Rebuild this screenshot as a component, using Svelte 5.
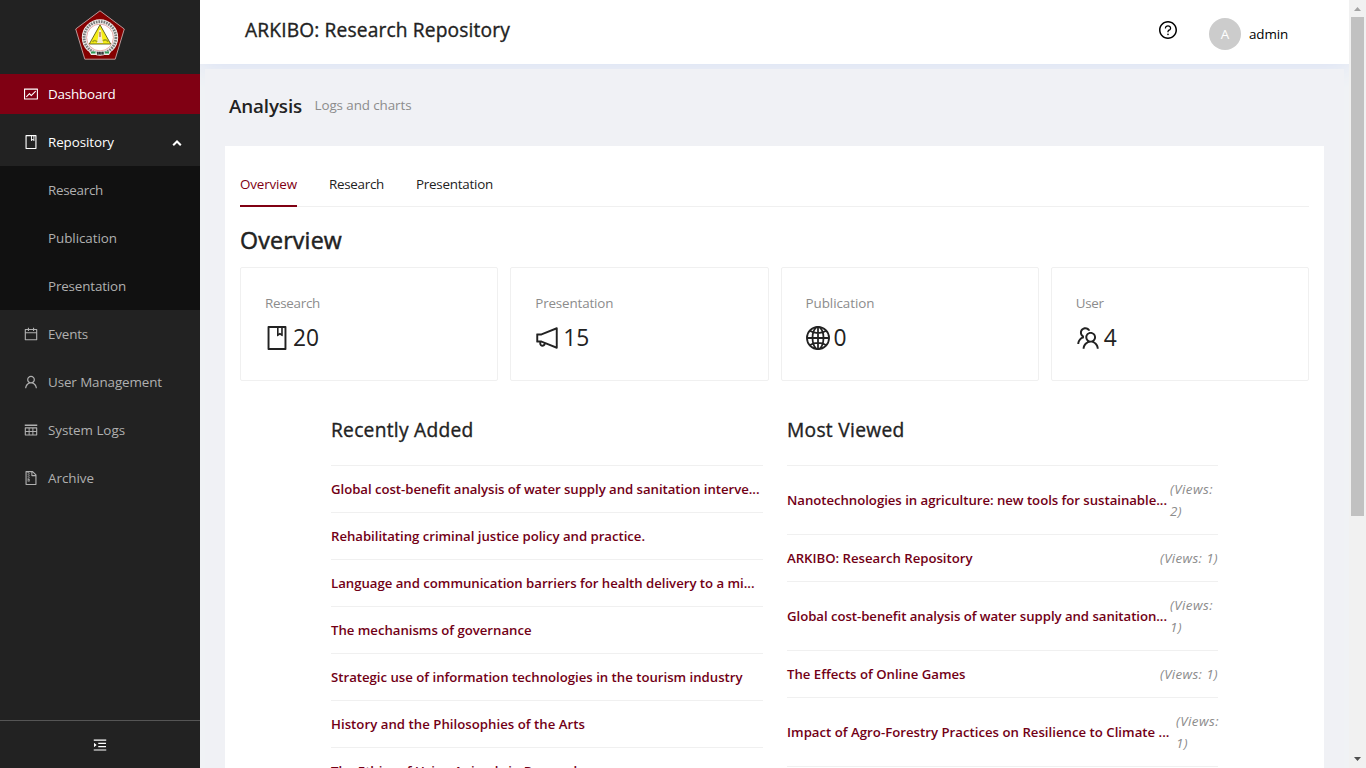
<script>
  const icons = {
    fund: 'M926 164H94c-17.7 0-32 14.3-32 32v640c0 17.7 14.3 32 32 32h832c17.7 0 32-14.3 32-32V196c0-17.7-14.3-32-32-32zm-40 632H134V236h752v560zm-658.9-82.3c3.1 3.1 8.2 3.1 11.3 0l172.5-172.5 114.4 114.5c3.1 3.1 8.2 3.1 11.3 0l297-297.2c3.1-3.1 3.1-8.2 0-11.3l-36.8-36.8a8.03 8.03 0 00-11.3 0L531 565 416.6 450.5a8.03 8.03 0 00-11.3 0l-214.9 215a8.03 8.03 0 000 11.3l36.7 36.9z',
    book: 'M832 64H192c-17.7 0-32 14.3-32 32v832c0 17.7 14.3 32 32 32h640c17.7 0 32-14.3 32-32V96c0-17.7-14.3-32-32-32zm-260 72h96v209.9L621.5 312 572 347.4V136zm220 752H232V136h280v296.9c0 3.3 1 6.6 3 9.3a15.9 15.9 0 0022.3 3.7l83.8-59.9 81.4 59.4c2.7 2 6 3.1 9.4 3.1 8.8 0 16-7.2 16-16V136h64v752z',
    calendar: 'M880 184H712v-64c0-4.4-3.6-8-8-8h-56c-4.4 0-8 3.6-8 8v64H384v-64c0-4.4-3.6-8-8-8h-56c-4.4 0-8 3.6-8 8v64H144c-17.7 0-32 14.3-32 32v664c0 17.7 14.3 32 32 32h736c17.7 0 32-14.3 32-32V216c0-17.7-14.3-32-32-32zm-40 656H184V460h656v380zM184 392V256h128v48c0 4.4 3.6 8 8 8h56c4.4 0 8-3.6 8-8v-48h256v48c0 4.4 3.6 8 8 8h56c4.4 0 8-3.6 8-8v-48h128v136H184z',
    user: 'M858.5 763.6a374 374 0 00-80.6-119.5 375.63 375.63 0 00-119.5-80.6c-.4-.2-.8-.3-1.2-.5C719.5 518 760 444.7 760 362c0-137-111-248-248-248S264 225 264 362c0 82.7 40.5 156 102.8 201.1-.4.2-.8.3-1.2.5-44.8 18.9-85 46-119.5 80.6a375.63 375.63 0 00-80.6 119.5A371.7 371.7 0 00136 901.8a8 8 0 008 8.2h60c4.4 0 7.9-3.5 8-7.8 2-77.2 33-149.5 87.8-204.3 56.7-56.7 132-87.9 212.2-87.9s155.5 31.2 212.2 87.9C779 752.7 810 825 812 902.2c.1 4.4 3.6 7.8 8 7.8h60a8 8 0 008-8.2c-1-47.8-10.9-94.3-29.5-138.2zM512 534c-45.9 0-89.1-17.9-121.6-50.4S340 407.9 340 362c0-45.9 17.9-89.1 50.4-121.6S466.1 190 512 190s89.1 17.9 121.6 50.4S684 316.1 684 362c0 45.9-17.9 89.1-50.4 121.6S557.9 534 512 534z',
    rows: 'M878.7 336H145.3c-18.4 0-33.3 14.3-33.3 32v464c0 17.7 14.9 32 33.3 32h733.3c18.4 0 33.3-14.3 33.3-32V368c.1-17.7-14.8-32-33.2-32zM360 792H184V632h176v160zm0-224H184V408h176v160zm240 224H424V632h176v160zm0-224H424V408h176v160zm240 224H664V632h176v160zm0-224H664V408h176v160zm64-408H120c-4.4 0-8 3.6-8 8v80c0 4.4 3.6 8 8 8h784c4.4 0 8-3.6 8-8v-80c0-4.4-3.6-8-8-8z',
    zip: 'M296 392h64v64h-64zm0 190v160h128V582h-64v-62h-64v62zm80 48v64h-32v-64h32zm-16-302h64v64h-64zm-64-64h64v64h-64zm64 192h64v64h-64zm0-256h64v64h-64zm494.6 88.6L639.4 73.4c-6-6-14.1-9.4-22.6-9.4H192c-17.7 0-32 14.3-32 32v832c0 17.7 14.3 32 32 32h640c17.7 0 32-14.3 32-32V311.3c0-8.5-3.4-16.7-9.4-22.7zM602 137.8L790.2 326H602V137.8zM792 888H232V136h64v64h64v-64h174v216a42 42 0 0042 42h216v494z',
    question: 'M512 64C264.6 64 64 264.6 64 512s200.6 448 448 448 448-200.6 448-448S759.4 64 512 64zm0 820c-205.4 0-372-166.6-372-372s166.6-372 372-372 372 166.6 372 372-166.6 372-372 372zM623.6 316.7C593.6 290.4 554 276 512 276s-81.6 14.5-111.6 40.7C369.2 344 352 380.7 352 420v7.6c0 4.4 3.6 8 8 8h48c4.4 0 8-3.6 8-8V420c0-44.1 43.1-80 96-80s96 35.9 96 80c0 31.1-22 59.6-56.1 72.7-21.2 8.1-39.2 22.3-52.1 40.9-13.1 19-19.9 41.8-19.9 64.9V620c0 4.4 3.6 8 8 8h48c4.4 0 8-3.6 8-8v-22.7a48.3 48.3 0 0130.9-44.8c59-22.7 97.1-74.7 97.1-132.5.1-39.3-17.1-76-48.3-103.3zM472 732a40 40 0 1080 0 40 40 0 10-80 0z',
    unfold: 'M408 442h480c4.4 0 8-3.6 8-8v-56c0-4.4-3.6-8-8-8H408c-4.4 0-8 3.6-8 8v56c0 4.4 3.6 8 8 8zm-8 204c0 4.4 3.6 8 8 8h480c4.4 0 8-3.6 8-8v-56c0-4.4-3.6-8-8-8H408c-4.4 0-8 3.6-8 8v56zm504-486H120c-4.4 0-8 3.6-8 8v56c0 4.4 3.6 8 8 8h784c4.4 0 8-3.6 8-8v-56c0-4.4-3.6-8-8-8zm0 632H120c-4.4 0-8 3.6-8 8v56c0 4.4 3.6 8 8 8h784c4.4 0 8-3.6 8-8v-56c0-4.4-3.6-8-8-8zM142.4 642.1L298.7 519a8.84 8.84 0 000-13.9L142.4 381.9c-5.8-4.6-14.4-.5-14.4 6.9v246.3a8.9 8.9 0 0014.4 7z',
    horn: 'M880 112c-3.8 0-7.7.7-11.6 2.3L292 345.9H128c-8.8 0-16 7.4-16 16.6v299c0 9.2 7.2 16.6 16 16.6h101.7c-3.7 11.6-5.7 23.9-5.7 36.4 0 65.9 53.8 119.5 120 119.5 55.4 0 102.1-37.6 115.9-88.4l408.6 164.2c3.9 1.5 7.8 2.3 11.6 2.3 16.9 0 32-14.2 32-33.2V145.2C912 126.2 897 112 880 112zM344 762.3c-26.5 0-48-21.4-48-47.8 0-11.2 3.9-21.9 11-30.4l84.9 34.1c-2 24.6-22.7 44.1-47.9 44.1zm496 58.4L318.8 611.3l-12.9-5.2H184V417.9h121.9l12.9-5.2L840 203.3v617.4z',
    team: 'M824.2 699.9a301.55 301.55 0 00-86.4-60.4C783.1 602.8 812 546.8 812 484c0-110.8-92.4-201.7-203.2-200-109.1 1.7-197 90.6-197 200 0 62.8 29 118.8 74.2 155.5a300.95 300.95 0 00-86.4 60.4C345 754.6 314 826.8 312 903.8a8 8 0 008 8.2h56c4.3 0 7.9-3.4 8-7.7 1.9-58 25.4-112.3 66.7-153.5A226.62 226.62 0 01612 684c60.9 0 118.2 23.7 161.3 66.8C814.6 792 838 846.3 840 904.3c.1 4.3 3.7 7.7 8 7.7h56a8 8 0 008-8.2c-2-77-33-149.2-87.8-203.9zM612 612c-34.2 0-66.4-13.3-90.5-37.5a126.86 126.86 0 01-37.5-91.8c.3-32.8 13.4-64.5 36.3-88 24-24.6 56.1-38.3 90.4-38.7 33.9-.3 66.8 12.9 91 36.6 24.8 24.3 38.4 56.8 38.4 91.4 0 34.2-13.3 66.3-37.5 90.5A127.3 127.3 0 01612 612zM361.5 510.4c-.9-8.7-1.4-17.5-1.4-26.4 0-15.9 1.5-31.4 4.3-46.5.7-3.6-1.2-7.3-4.5-8.8-13.6-6.1-26.1-14.5-36.9-25.1a127.54 127.54 0 01-38.7-95.4c.9-32.1 13.8-62.6 36.3-85.6 24.7-25.3 57.9-39.1 93.2-38.7 31.9.3 62.7 12.6 86 34.4 7.9 7.4 14.7 15.6 20.4 24.4 2 3.1 5.9 4.4 9.3 3.2 17.6-6.1 36.2-10.4 55.3-12.4 5.6-.6 8.8-6.6 6.3-11.6-32.5-64.3-98.9-108.7-175.7-109.9-110.9-1.7-203.3 89.2-203.3 199.9 0 62.8 28.9 118.8 74.2 155.5-31.8 14.7-61.1 35-86.5 60.4-54.8 54.7-85.8 126.9-87.8 204a8 8 0 008 8.2h56.1c4.3 0 7.9-3.4 8-7.7 1.9-58 25.4-112.3 66.7-153.5 29.4-29.4 65.4-49.8 104.7-59.7 3.9-1 6.5-4.7 6-8.7z'
  };

  const submenu = [
    { label: 'Research', w: 55 },
    { label: 'Publication', w: 69 },
    { label: 'Presentation', w: 78 }
  ];
  const menu = [
    { label: 'Events', icon: 'calendar', w: 40 },
    { label: 'User Management', icon: 'user', w: 114 },
    { label: 'System Logs', icon: 'rows', w: 77 },
    { label: 'Archive', icon: 'zip', w: 46 }
  ];
  const tabs = [
    { label: 'Overview', w: 57, active: true },
    { label: 'Research', w: 55 },
    { label: 'Presentation', w: 77 }
  ];
  const stats = [
    { label: 'Research', w: 55, icon: 'book', value: 20, vw: 26 },
    { label: 'Presentation', w: 78, icon: 'horn', value: 15, vw: 26 },
    { label: 'Publication', w: 69, icon: 'globe', value: 0, vw: 13 },
    { label: 'User', w: 28, icon: 'team', value: 4, vw: 13 }
  ];
  const recent = [
    { title: 'Global cost-benefit analysis of water supply and sanitation interve...', w: 428.5 },
    { title: 'Rehabilitating criminal justice policy and practice.', w: 314 },
    { title: 'Language and communication barriers for health delivery to a mi...', w: 423.5 },
    { title: 'The mechanisms of governance', w: 200.5 },
    { title: 'Strategic use of information technologies in the tourism industry', w: 411.5 },
    { title: 'History and the Philosophies of the Arts', w: 254 },
    { title: 'The Ethics of Using Animals in Research', w: 251 }
  ];
  const viewed = [
    { title: 'Nanotechnologies in agriculture: new tools for sustainable...', w: 380, views: 2, box: 48 },
    { title: 'ARKIBO: Research Repository', w: 185.5, views: 1 },
    { title: 'Global cost-benefit analysis of water supply and sanitation...', w: 380, views: 1, box: 48 },
    { title: 'The Effects of Online Games', w: 178.5, views: 1 },
    { title: 'Impact of Agro-Forestry Practices on Resilience to Climate ...', w: 382.5, views: 1, box: 42 }
  ];

  // Tracks the text so that it fills the given width.
  function fit(node, width) {
    const natural = node.getBoundingClientRect().width;
    node.style.letterSpacing = `${(width - natural) / node.textContent.length}px`;
  }
</script>

{#snippet icon(name)}
  {#if name === 'globe'}
    <svg class="icon" viewBox="64 64 896 896" fill="none" stroke="currentColor" stroke-width="66">
      <circle cx="512" cy="512" r="413" />
      <ellipse cx="512" cy="512" rx="206" ry="413" />
      <path d="M512 99v826M99 512h826M205 245c170 112 444 112 614 0M205 779c170-112 444-112 614 0" />
    </svg>
  {:else}
    <svg class="icon" viewBox="64 64 896 896" fill="currentColor"><path d={icons[name]} /></svg>
  {/if}
{/snippet}

<div class="page">
  <aside>
    <div class="logo">
      <svg viewBox="0 0 50 50" width="50" height="50">
        <path d="M25 .8 49.3 19 40.2 49.2H9.8L.7 19z" fill="#850000" stroke="#b99a9a" stroke-width="1" />
        <circle cx="25" cy="27.5" r="18.2" fill="#f0f0ee" />
        <circle cx="25" cy="27.5" r="15.9" fill="none" stroke="#555" stroke-width="2.8" stroke-dasharray="1.7 .9" opacity=".75" />
        <circle cx="25" cy="27.5" r="13.4" fill="#fff" stroke="#d88" stroke-width=".7" />
        <path d="M25 14.8 35.7 34H14.3z" fill="#f6ee16" stroke="#5e5b16" stroke-width=".9" />
        <path d="M24 20h2l1.2 9 1 4h-6.4l1-4z" fill="#f5ecd0" />
        <path d="M24 22h2v5h-2z" fill="#c99a6a" />
        <path d="M17.5 32c1.5-2 3-2 4.5 0M28 31c2-2 4-1 5 1" fill="none" stroke="#a7a51c" stroke-width="1.6" />
        <path d="M14 41.5h7v3.5h-5zM29.6 41.5H36L34 45h-4.4z" fill="#f0f0ee" />
        <path d="M16 42.5h4.5M29.8 42.5H34" stroke="#2f9a55" stroke-width="2.2" />
        <path d="M22 43.2h6.8" stroke="#333" stroke-width="2.8" stroke-dasharray="1.3 .4" />
      </svg>
    </div>
    <div class="item active">{@render icon('fund')}<span use:fit={67.5}>Dashboard</span></div>
    <div class="item open">
      {@render icon('book')}<span use:fit={66}>Repository</span>
      <svg class="caret" viewBox="0 0 10 6" width="10" height="6"><path d="M1.2 5.2 5 1.5 8.8 5.2" fill="none" stroke="#fff" stroke-width="2.1" /></svg>
    </div>
    <div class="sub">
      {#each submenu as s}<div class="subitem"><span use:fit={s.w}>{s.label}</span></div>{/each}
    </div>
    {#each menu as m}
      <div class="item">{@render icon(m.icon)}<span use:fit={m.w}>{m.label}</span></div>
    {/each}
    <div class="trigger">{@render icon('unfold')}</div>
  </aside>

  <div class="main">
    <header>
      <h1><span use:fit={265}>ARKIBO: Research Repository</span></h1>
      <div class="help">{@render icon('question')}</div>
      <div class="account">
        <div class="avatar">A</div>
        <span use:fit={39}>admin</span>
      </div>
    </header>
    <div class="content">
      <div class="heading">
        <h2><span use:fit={73}>Analysis</span></h2>
        <span class="hint" use:fit={97}>Logs and charts</span>
      </div>
      <section>
        <nav>
          {#each tabs as t}<div class="tab" class:current={t.active}><span use:fit={t.w}>{t.label}</span></div>{/each}
        </nav>
        <h3><span use:fit={102}>Overview</span></h3>
        <div class="stats">
          {#each stats as s}
            <div class="stat">
              <div class="label"><span use:fit={s.w}>{s.label}</span></div>
              <div class="value">{@render icon(s.icon)}<span use:fit={s.vw}>{s.value}</span></div>
            </div>
          {/each}
        </div>
        <div class="lists">
          <div>
            <h4><span use:fit={142.5}>Recently Added</span></h4>
            {#each recent as r}<div class="row"><b use:fit={r.w}>{r.title}</b></div>{/each}
          </div>
          <div>
            <h4><span use:fit={117.5}>Most Viewed</span></h4>
            {#each viewed as v}
              <div class="row">
                <b use:fit={v.w}>{v.title}</b>
                {#if v.box}
                  <div class="views" style:width="{v.box}px"><i use:fit={43}>(Views:</i><i use:fit={12}>{v.views})</i></div>
                {:else}
                  <i use:fit={58}>(Views: {v.views})</i>
                {/if}
              </div>
            {/each}
          </div>
        </div>
      </section>
    </div>
  </div>

  <div class="scrollbar">
    <svg width="17" height="17" viewBox="0 0 17 17"><path d="M8.5 7 12 11H5z" fill="#a3a3a3" /></svg>
    <div class="thumb"></div>
    <svg class="down" width="17" height="17" viewBox="0 0 17 17"><path d="M5 6h7l-3.5 4z" fill="#505050" /></svg>
  </div>
</div>

<style>
  :global(body) { margin: 0; overflow: hidden; }
  .page {
    display: flex;
    height: 768px;
    width: 1366px;
    overflow: hidden;
    background: #f0f2f5;
    font: 13.4px/22px "Open Sans", "Noto Sans", sans-serif;
    color: #222;
    box-sizing: border-box;
  }
  .page * { box-sizing: border-box; }
  span, b, i { display: inline-block; white-space: nowrap; }
  .icon { width: 14px; height: 14px; flex: none; display: block; }
  h1, h2, h3, h4 { margin: 0; font-weight: 400; -webkit-text-stroke: 0.35px currentColor; }

  aside { position: relative; z-index: 1; width: 200px; flex: none; background: #222; color: #b0b0b0; display: flex; flex-direction: column; }
  .logo { height: 74px; padding: 10px 0 0 75px; flex: none; }
  .logo svg { display: block; }
  .item { height: 40px; margin: 4px 0; padding-left: 24px; display: flex; align-items: center; gap: 10px; flex: none; }
  .item.active { background: #800013; color: #fff; margin-top: 0; }
  .item.open { height: 48px; margin: 0; color: #fff; }
  .caret { margin: 1px 18px 0 auto; }
  .sub { background: #111; flex: none; }
  .subitem { height: 48px; padding-left: 48px; display: flex; align-items: center; }
  .trigger { margin-top: auto; height: 48px; border-top: 1px solid #555; display: flex; align-items: center; justify-content: center; color: #fff; }

  .main { flex: 1; min-width: 0; display: flex; flex-direction: column; }
  header { height: 64px; flex: none; background: #fff; box-shadow: 0 2px 24px #d8e0f5; display: flex; padding-left: 45px; }
  h1 { font-size: 19.2px; line-height: 60px; }
  .help { margin-left: auto; padding-top: 21px; color: #000; }
  .help :global(svg) { width: 18px; height: 18px; }
  .account { display: flex; align-items: center; gap: 8px; margin: 4px 61px 0 32px; height: 60px; color: #000; }
  .avatar { width: 32px; height: 32px; border-radius: 50%; background: #ccc; color: #fff; text-align: center; line-height: 32px; }

  .content { position: relative; flex: 1; min-height: 0; margin: 5px 5px 0; padding: 0 20px; background: #f0f1f5; overflow: hidden; }
  .heading { height: 77px; padding: 0 0 4px 4px; display: flex; align-items: center; gap: 12.5px; }
  h2 { font-size: 18.8px; line-height: 32px; font-weight: 600; -webkit-text-stroke-width: 0; }
  .hint { color: #8c8c8c; margin-bottom: 2px; }
  section { background: #fff; padding: 15px; height: 900px; }
  nav { display: flex; gap: 32px; height: 46px; border-bottom: 1px solid #f0f0f0; }
  .tab { height: 46px; padding-top: 12px; }
  .tab.current { color: #800013; border-bottom: 2px solid #800013; }
  h3 { font-size: 23.2px; line-height: 32px; padding-top: 17px; height: 60px; -webkit-text-stroke-width: 0.5px; }
  .stats { display: grid; grid-template-columns: repeat(4, 1fr); gap: 12px; }
  .stat { height: 114px; border: 1px solid #f0f0f0; border-radius: 2px; padding: 24px; }
  .label { color: #8c8c8c; margin-bottom: 4px; }
  .value { display: flex; align-items: center; gap: 4px; font-size: 22.8px; line-height: 38px; }
  .value span { padding-top: 1px; }
  .value :global(svg) { width: 24px; height: 24px; }
  .lists { display: grid; grid-template-columns: 432px 431px; gap: 24px; padding: 33px 0 0 91px; }
  h4 { font-size: 19.2px; line-height: 32px; height: 52px; border-bottom: 1px solid #f0f0f0; }
  .row { display: flex; align-items: center; justify-content: space-between; padding: 12px 0; border-bottom: 1px solid #f0f0f0; color: #720016; min-height: 47px; }
  b { font-weight: 600; font-size: 13.2px; }
  i { color: #8c8c8c; }
  .views { display: flex; flex-direction: column; align-items: flex-start; }

  .scrollbar { width: 17px; flex: none; background: #f1f1f1; display: flex; flex-direction: column; }
  .scrollbar svg { display: block; flex: none; }
  .thumb { width: 13px; height: 499px; margin-left: 2px; background: #c1c1c1; }
  .down { margin-top: auto; }
</style>
